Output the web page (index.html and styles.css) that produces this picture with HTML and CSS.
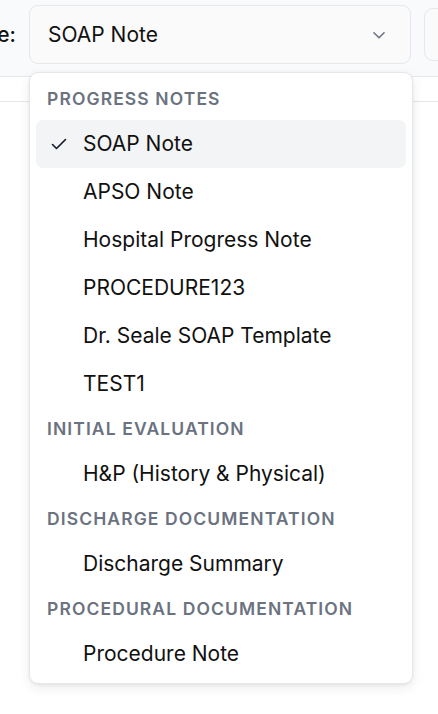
FILE: index.html
```html
<!DOCTYPE html>
<html>
<head>
<meta charset="utf-8">
<link rel="stylesheet" href="styles.css">
</head>
<body>
<div class="topbar">
  <span class="label">Template:</span>
  <div class="select">
    <span class="select-value">SOAP Note</span>
    <svg class="chev" width="16" height="16" viewBox="0 0 16 16"><path d="M3.5 6l4.5 4.5L12.5 6" fill="none" stroke="#6b7280" stroke-width="1.4" stroke-linecap="round" stroke-linejoin="round"/></svg>
  </div>
  <div class="select2"></div>
</div>
<div class="tabs"></div>
<div class="menu">
  <div class="group">Progress Notes</div>
  <div class="item active"><svg class="check" width="18" height="18" viewBox="0 0 18 18"><path d="M2.5 9.5l4 4L15.5 4.5" fill="none" stroke="#111827" stroke-width="1.6" stroke-linecap="round" stroke-linejoin="round"/></svg>SOAP Note</div>
  <div class="item">APSO Note</div>
  <div class="item">Hospital Progress Note</div>
  <div class="item">PROCEDURE123</div>
  <div class="item">Dr. Seale SOAP Template</div>
  <div class="item">TEST1</div>
  <div class="group">Initial Evaluation</div>
  <div class="item">H&amp;P (History &amp; Physical)</div>
  <div class="group">Discharge Documentation</div>
  <div class="item">Discharge Summary</div>
  <div class="group">Procedural Documentation</div>
  <div class="item">Procedure Note</div>
</div>
</body>
</html>
```

FILE: styles.css
```css
html, body {
  margin: 0;
  padding: 0;
  background: #ffffff;
  font-family: Inter, "Liberation Sans", sans-serif;
  color: #111111;
  overflow: hidden;
}
.topbar {
  height: 71px;
  background: #f9fafb;
  border-bottom: 1px solid #e5e7eb;
  display: flex;
  align-items: flex-start;
  padding-top: 5px;
  box-sizing: content-box;
  position: relative;
}
.label {
  font-size: 21px;
  font-weight: 500;
  line-height: 59px;
  margin-left: -83px;
  width: 102px;
  white-space: nowrap;
  flex: none;
  color: #111111;
}
.select {
  margin-left: 10px;
  width: 382px;
  height: 59px;
  box-sizing: border-box;
  border: 1px solid #e5e7eb;
  border-radius: 9px;
  background: #fafafa;
  display: flex;
  align-items: center;
  justify-content: space-between;
  padding: 0 22px 0 18px;
  flex: none;
}
.select-value {
  font-size: 21px;
  color: #111111;
}
.chev {
  width: 18px;
  height: 18px;
}
.select2 {
  margin-left: 13px;
  margin-top: 3px;
  width: 60px;
  height: 53px;
  box-sizing: border-box;
  border: 1px solid #e5e7eb;
  border-radius: 9px;
  background: #fafafa;
  flex: none;
}
.tabs {
  height: 24px;
  border-bottom: 1px solid #e5e7eb;
}
.menu {
  position: absolute;
  left: 29px;
  top: 72px;
  width: 384px;
  box-sizing: border-box;
  background: #ffffff;
  border: 1px solid #e5e7eb;
  border-radius: 9px;
  box-shadow: 0 4px 12px rgba(0,0,0,0.08), 0 1px 3px rgba(0,0,0,0.06);
  padding: 5px 6px;
}
.group {
  height: 42px;
  line-height: 42px;
  padding-left: 11px;
  font-size: 17.5px;
  font-weight: 600;
  letter-spacing: 1.1px;
  text-transform: uppercase;
  color: #6b7280;
}
.item {
  height: 48px;
  line-height: 48px;
  padding-left: 47px;
  font-size: 21px;
  color: #111111;
  border-radius: 7px;
  position: relative;
}
.item.active {
  background: #f3f4f6;
}
.check {
  position: absolute;
  left: 14px;
  top: 15px;
}
```
